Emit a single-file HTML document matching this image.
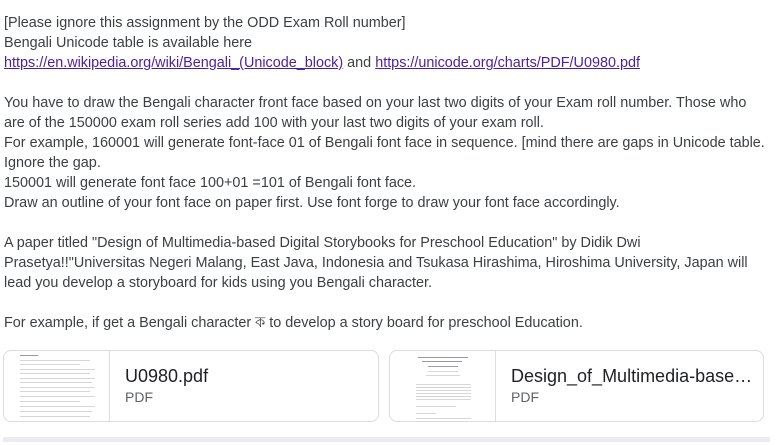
<!DOCTYPE html>
<html><head><meta charset="utf-8"><style>
body{margin:0;width:777px;height:445px;overflow:hidden;background:#fff;font-family:"Liberation Sans","Noto Sans CJK SC",sans-serif;font-size:14px;color:#3c4043}
.t{position:absolute;left:4px;top:13px;line-height:20px;width:775px;white-space:nowrap;font-size:14.4px}
a{color:#4e1ea0;text-decoration:underline}
.card{position:absolute;top:350px;height:70px;border:1px solid #dadce0;border-radius:8px;overflow:hidden;background:#fff}
.th{position:absolute;left:0;top:0;width:105px;height:70px;border-right:1px solid #dadce0}
.nm{position:absolute;left:121px;top:15px;font-size:18px;color:#202124}
.ty{position:absolute;left:121px;top:38px;font-size:14px;color:#5f6368}
.ln{position:absolute;height:1px;background:#d6d6d6}
.bar{position:absolute;left:3px;top:437px;width:767px;height:5px;background:#ececf0}
</style></head><body>
<div class="t">[Please ignore this assignment by the ODD Exam Roll number]<br>Bengali Unicode table is available here<br><a>https://en.wikipedia.org/wiki/Bengali_(Unicode_block)</a> and <a>https://unicode.org/charts/PDF/U0980.pdf</a><br><br>You have to draw the Bengali character front face based on your last two digits of your Exam roll number. Those who<br>are of the 150000 exam roll series add 100 with your last two digits of your exam roll.<br>For example, 160001 will generate font-face 01 of Bengali font face in sequence. [mind there are gaps in Unicode table.<br>Ignore the gap.<br>150001 will generate font face 100+01 =101 of Bengali font face.<br>Draw an outline of your font face on paper first. Use font forge to draw your font face accordingly.<br><br>A paper titled "Design of Multimedia-based Digital Storybooks for Preschool Education" by Didik Dwi<br>Prasetya!!"Universitas Negeri Malang, East Java, Indonesia and Tsukasa Hirashima, Hiroshima University, Japan will<br>lead you develop a storyboard for kids using you Bengali character.<br><br>For example, if get a Bengali character ক to develop a story board for preschool Education.</div>
<div class="card" style="left:3px;width:374px">
<div class="th">
<div class="ln" style="left:16px;top:4px;width:18px;background:#999"></div>
<div class="ln" style="left:16px;top:9px;width:70px"></div><div class="ln" style="left:16px;top:13px;width:60px"></div>
<div class="ln" style="left:16px;top:18px;width:75px"></div><div class="ln" style="left:16px;top:22px;width:70px"></div>
<div class="ln" style="left:16px;top:27px;width:75px"></div><div class="ln" style="left:16px;top:31px;width:72px"></div>
<div class="ln" style="left:16px;top:36px;width:75px"></div><div class="ln" style="left:16px;top:40px;width:70px"></div>
<div class="ln" style="left:16px;top:45px;width:75px"></div><div class="ln" style="left:16px;top:50px;width:60px"></div>
<div class="ln" style="left:16px;top:55px;width:75px"></div><div class="ln" style="left:16px;top:60px;width:72px"></div>
<div class="ln" style="left:16px;top:65px;width:70px"></div>
</div>
<div class="nm">U0980.pdf</div><div class="ty">PDF</div></div>
<div class="card" style="left:389px;width:373px">
<div class="th">
<div class="ln" style="left:28px;top:6px;width:50px;background:#999"></div><div class="ln" style="left:32px;top:10px;width:40px;background:#999"></div>
<div class="ln" style="left:38px;top:15px;width:30px;background:#99c"></div>
<div class="ln" style="left:38px;top:20px;width:30px"></div><div class="ln" style="left:36px;top:24px;width:34px"></div>
<div class="ln" style="left:26px;top:33px;width:55px"></div><div class="ln" style="left:26px;top:36px;width:55px"></div>
<div class="ln" style="left:26px;top:39px;width:55px"></div><div class="ln" style="left:26px;top:42px;width:55px"></div>
<div class="ln" style="left:26px;top:45px;width:55px"></div><div class="ln" style="left:26px;top:48px;width:55px"></div>
<div class="ln" style="left:26px;top:55px;width:40px"></div><div class="ln" style="left:26px;top:62px;width:20px"></div>
<div class="ln" style="left:26px;top:67px;width:55px"></div>
</div>
<div class="nm">Design_of_Multimedia-base…</div><div class="ty">PDF</div></div>
<div class="bar"></div>
</body></html>
